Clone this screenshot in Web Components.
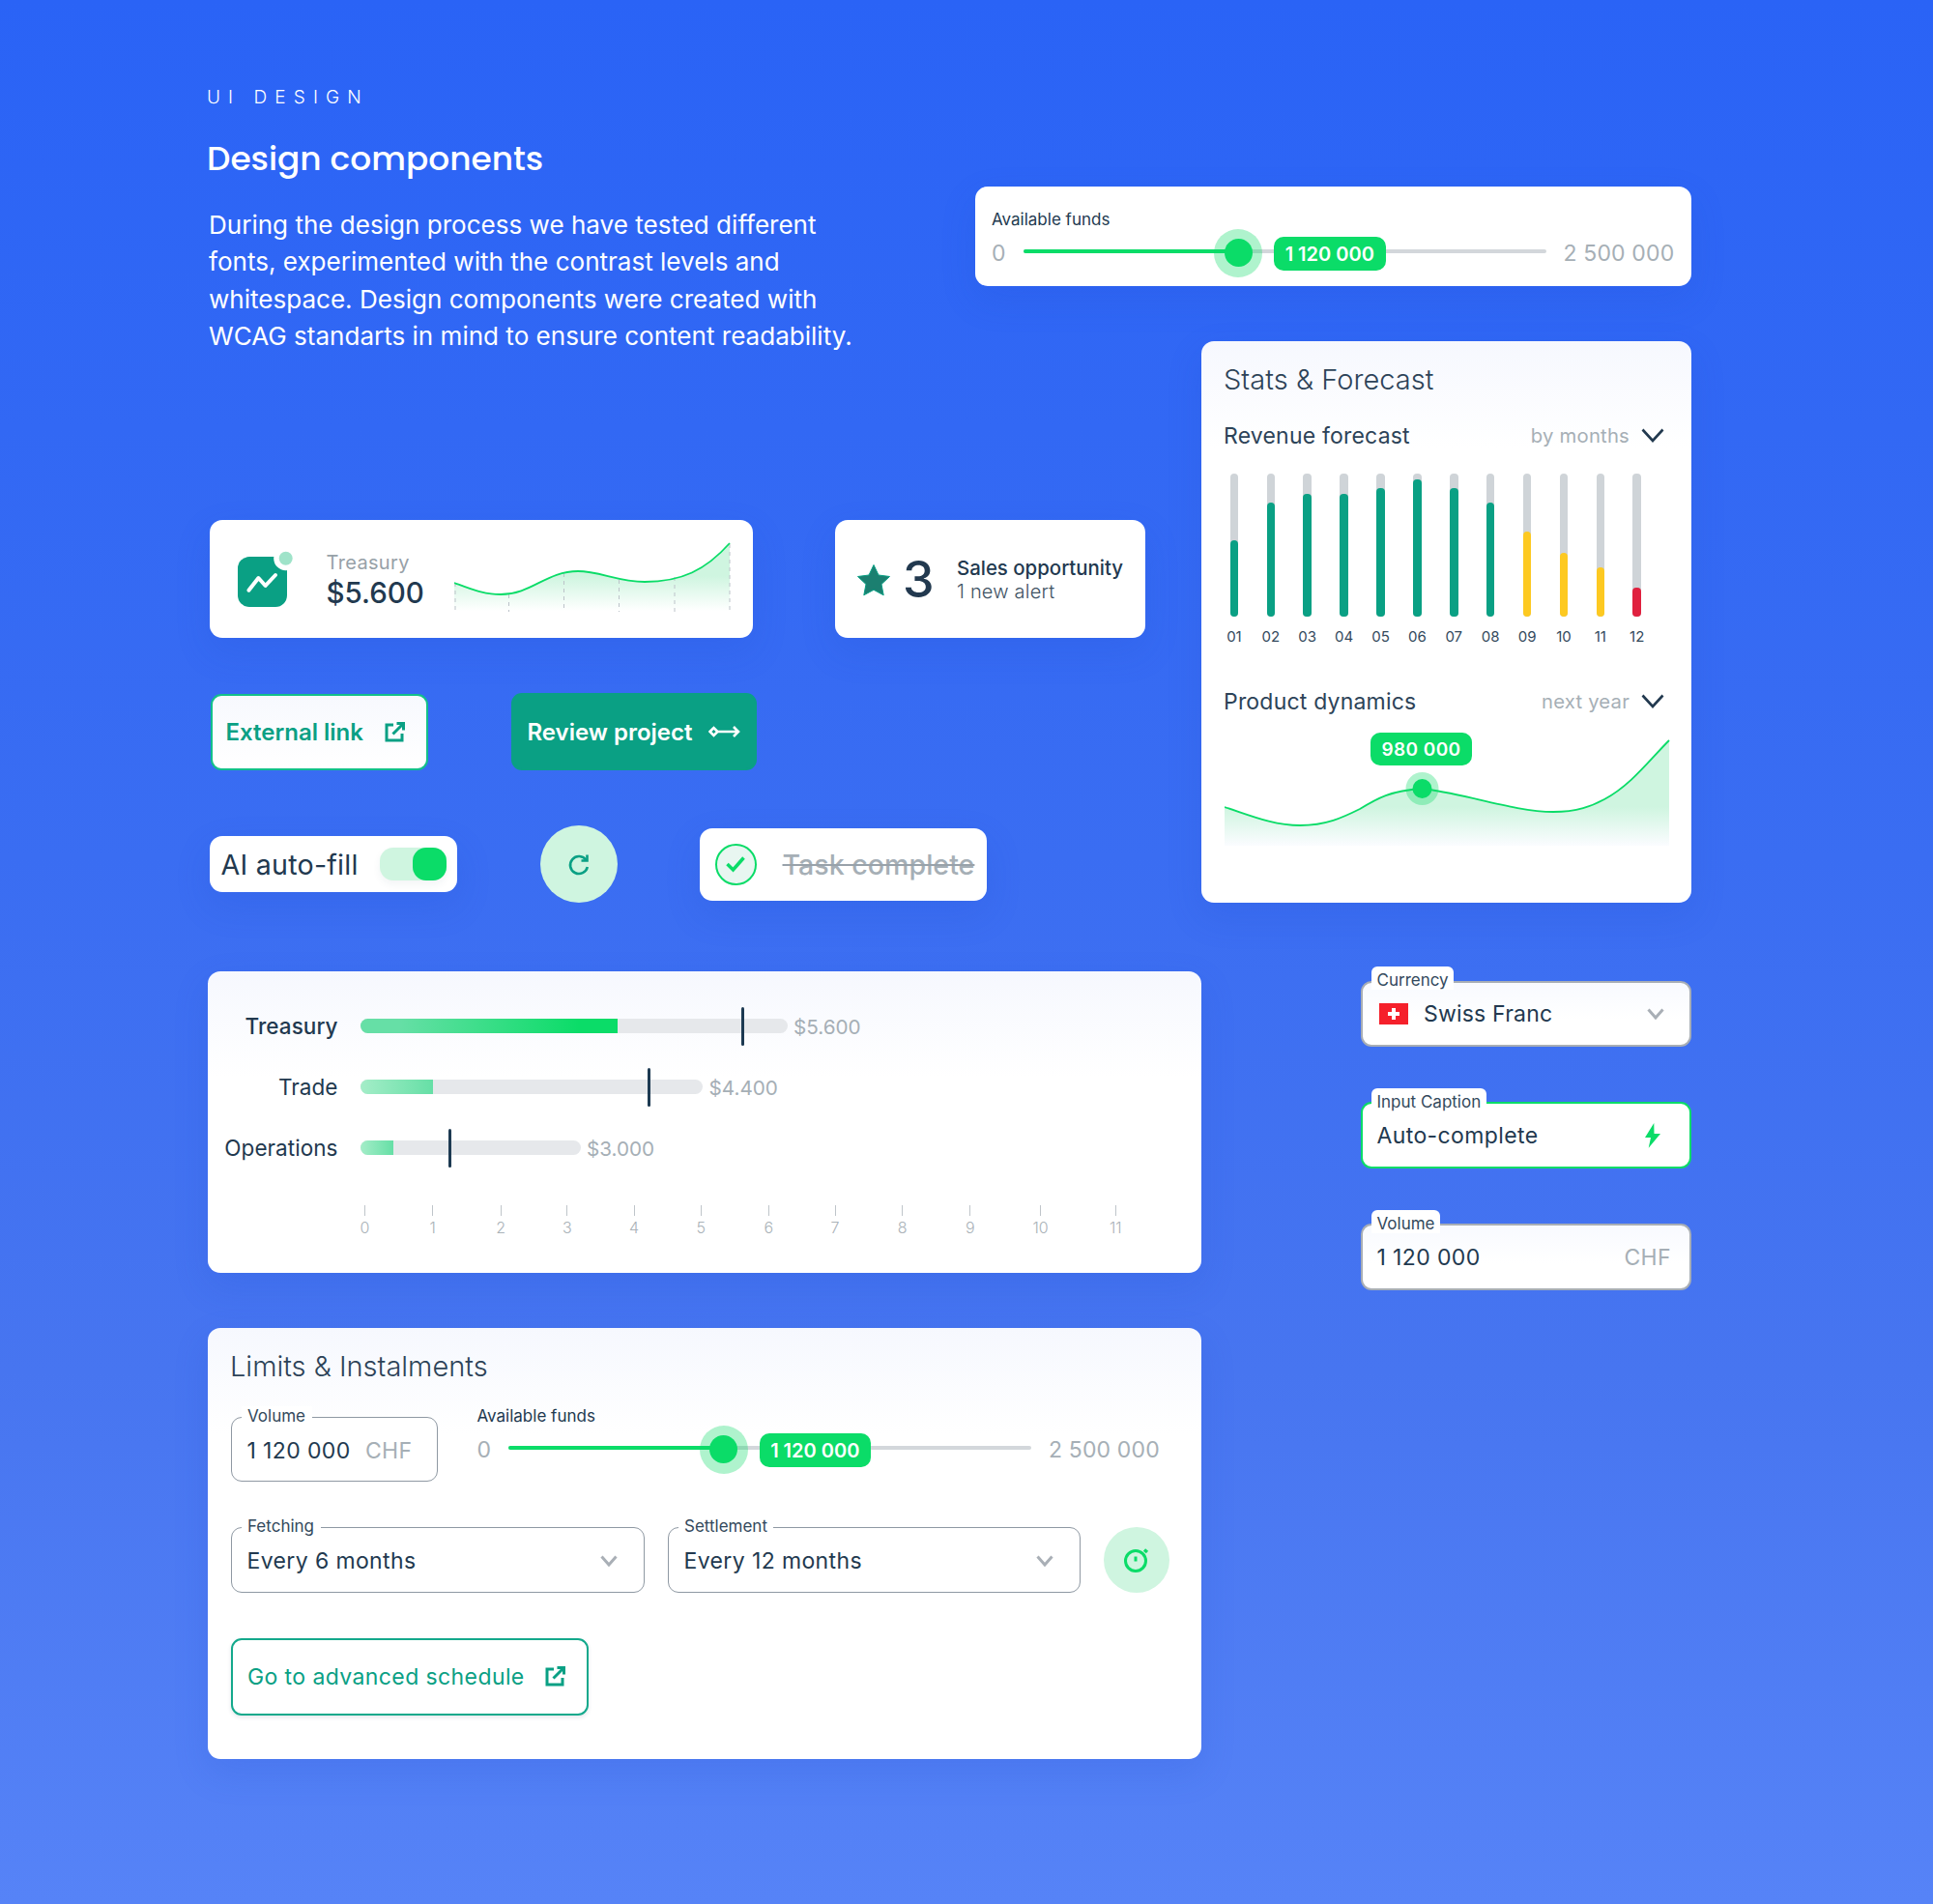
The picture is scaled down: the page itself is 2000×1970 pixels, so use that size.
<!doctype html>
<html lang="en">
<head>
<meta charset="utf-8">
<title>Design components</title>
<style>
  html, body { margin: 0; }
  body {
    width: 2000px;
    height: 1970px;
    overflow: hidden;
    background: linear-gradient(180deg, #2a63f6 0%, #3a6df2 45%, #4775f0 72%, #5683f7 100%);
    font-family: Inter, "Noto Sans", sans-serif;
    color: #22394f;
    --ink: #22394f;
    --muted: #a6afb6;
    --teal: #0aa084;
    --green: #0bdc68;
    --mint: #cff5e0;
  }
</style>
</head>
<body>
<design-board></design-board>
<script>
const chevron = (w, h, color, sw) => `<svg width="${w}" height="${h}" viewBox="0 0 ${w} ${h}" fill="none" stroke="${color}" stroke-width="${sw}"><path d="M1.5 1.5 L${w / 2} ${h - 2} L${w - 1.5} 1.5"/></svg>`;
const extIcon = `<svg width="21" height="21" viewBox="0 0 21 21" fill="none" stroke="currentColor" stroke-width="3"><path d="M9 3H2v16h16v-7"/><path d="M8.5 12.5 19 2"/><path d="M12.5 1.5h7v7"/></svg>`;

class UiCard extends HTMLElement {
  constructor() {
    super();
    this.attachShadow({ mode: "open" });
  }
  connectedCallback() {
    this.shadowRoot.innerHTML = `
      <style>
        :host {
          display: block;
          box-sizing: border-box;
          background: #fff;
          border-radius: 13px;
          box-shadow: 0 14px 36px rgba(32, 72, 205, .16);
        }
        :host([wash]) { background: linear-gradient(180deg, #f6f8fe 0, #fff 110px); }
      </style>
      <slot></slot>`;
  }
}
customElements.define("ui-card", UiCard);

class HeroIntro extends HTMLElement {
  constructor() {
    super();
    this.attachShadow({ mode: "open" });
  }
  connectedCallback() {
    this.shadowRoot.innerHTML = `
      <style>
        :host { display: block; color: #fff; padding-top: 89px; }
        .eyebrow { font-size: 19px; line-height: 24px; font-weight: 300; letter-spacing: 8.1px; margin-left: -1px; }
        h1 { margin: 30.5px 0 0 -1px; font: 500 34.4px/40px Poppins, Inter, sans-serif; }
        p { margin: 30px 0 0 1px; font-size: 26.05px; line-height: 38.5px; font-weight: 400; }
      </style>
      <div class="eyebrow">UI DESIGN</div>
      <h1>Design components</h1>
      <p>During the design process we have tested different<br>fonts, experimented with the contrast levels and<br>whitespace. Design components were created with<br>WCAG standarts in mind to ensure content readability.</p>`;
  }
}
customElements.define("hero-intro", HeroIntro);

class RangeSlider extends HTMLElement {
  constructor() {
    super();
    this.attachShadow({ mode: "open" });
  }
  connectedCallback() {
    const max = this.getAttribute("max");
    const val = this.getAttribute("value");
    this.shadowRoot.innerHTML = `
      <style>
        :host { display: block; }
        .label { font-size: 17px; line-height: 20px; color: var(--ink); }
        .row { display: flex; align-items: center; height: 50px; font-size: 23px; color: var(--muted); letter-spacing: .15px; white-space: nowrap; }
        .min { width: 32.5px; flex: none; }
        .track { position: relative; width: 541px; height: 50px; margin-right: 18px; flex: none; }
        .line { position: absolute; left: 0; right: 0; top: 21px; height: 4px; border-radius: 2px; background: #d3d7db; }
        .line i { display: block; width: 222px; height: 100%; border-radius: 2px; background: var(--green); }
        .halo { position: absolute; left: 197.5px; top: 0; width: 50px; height: 50px; border-radius: 50%; background: rgba(11, 220, 104, .33); }
        .knob { position: absolute; left: 208px; top: 10px; width: 29px; height: 29px; border-radius: 50%; background: var(--green); }
        .pill { position: absolute; left: 259.5px; top: 8px; width: 115.5px; height: 35px; box-sizing: border-box; display: flex; align-items: center; justify-content: center; border-radius: 10px; background: var(--green); color: #fff; font-size: 20px; font-weight: 600; letter-spacing: 0; }
      </style>
      <div class="label">Available funds</div>
      <div class="row">
        <span class="min">0</span>
        <div class="track">
          <div class="line"><i></i></div>
          <div class="halo"></div>
          <div class="knob"></div>
          <div class="pill">${val}</div>
        </div>
        <span>${max}</span>
      </div>`;
  }
}
customElements.define("range-slider", RangeSlider);

class TreasuryTile extends HTMLElement {
  constructor() {
    super();
    this.attachShadow({ mode: "open" });
  }
  connectedCallback() {
    this.shadowRoot.innerHTML = `
      <style>
        :host { display: flex; align-items: center; height: 100%; padding-left: 29px; box-sizing: border-box; }
        .icon { width: 58px; height: 58px; flex: none; margin-right: 33.5px; }
        .txt { width: 132.5px; flex: none; margin-top: 1px; }
        .lbl { font-size: 20px; line-height: 24px; color: #97a1a8; letter-spacing: .35px; }
        .val { font-size: 29.5px; line-height: 34px; font-weight: 500; margin-top: 2px; color: var(--ink); }
        .spark { flex: none; margin-top: -5px; }
      </style>
      <svg class="icon" viewBox="0 0 58 58">
        <rect x="0" y="6" width="51" height="52" rx="12" fill="#0aa084"/>
        <circle cx="49.7" cy="7.7" r="12.5" fill="#fff"/>
        <circle cx="49.7" cy="7.7" r="7" fill="#9fe3c9"/>
        <path d="M11.4 40.7 21.4 28l7.2 8L39 25" fill="none" stroke="#fff" stroke-width="4" stroke-linecap="round" stroke-linejoin="round"/>
      </svg>
      <div class="txt"><div class="lbl">Treasury</div><div class="val">$5.600</div></div>
      <svg class="spark" width="287" height="74" viewBox="0 0 287 74" fill="none">
        <defs><linearGradient id="sp" x1="0" y1="0" x2="0" y2="72" gradientUnits="userSpaceOnUse"><stop offset=".5" stop-color="#cff5e0"/><stop offset="1" stop-color="#fff"/></linearGradient></defs>
        <path d="M0 43C16 49 30 55 48 55C80 55 95 31 128 31C150 31 170 42 197 42C235 42 260 30 285 2L285 73L0 73Z" fill="url(#sp)"/>
        <path d="M1 43V73M56.500 55V73M113.500 33V73M170.500 40V73M228 37V73M285 3V73" stroke="#bcc3c9" stroke-width="1" stroke-dasharray="4 4"/>
        <path d="M0 43C16 49 30 55 48 55C80 55 95 31 128 31C150 31 170 42 197 42C235 42 260 30 285 2" stroke="#0bdc68" stroke-width="1.800"/>
      </svg>`;
  }
}
customElements.define("treasury-tile", TreasuryTile);

class AlertTile extends HTMLElement {
  constructor() {
    super();
    this.attachShadow({ mode: "open" });
  }
  connectedCallback() {
    this.shadowRoot.innerHTML = `
      <style>
        :host { display: flex; align-items: center; height: 100%; padding: 1px 0 0 22px; box-sizing: border-box; }
        svg { flex: none; width: 36px; height: 34px; margin-right: 12px; }
        .n { font-size: 52px; line-height: 60px; font-weight: 500; width: 56px; flex: none; color: var(--ink); }
        .a { font-size: 20.4px; line-height: 25px; font-weight: 500; color: var(--ink); }
        .b { font-size: 20px; line-height: 25px; font-weight: 300; color: #3f5364; letter-spacing: .2px; }
      </style>
      <svg viewBox="0 0 36 34"><path d="M18 1.500l5 10.500 11.500 1.500-8.500 8 2.200 11.300L18 27.300 7.800 32.800 10 21.500l-8.500-8L13 12z" fill="#1b7f70" stroke="#0aa084" stroke-width="1" stroke-linejoin="round"/></svg>
      <div class="n">3</div>
      <div><div class="a">Sales opportunity</div><div class="b">1 new alert</div></div>`;
  }
}
customElements.define("alert-tile", AlertTile);

class ActionButton extends HTMLElement {
  constructor() {
    super();
    this.attachShadow({ mode: "open" });
  }
  connectedCallback() {
    this.shadowRoot.innerHTML = `
      <style>
        :host {
          display: flex;
          align-items: center;
          justify-content: space-between;
          box-sizing: border-box;
          border-radius: 11px;
          font-size: 24px;
          font-weight: 600;
          color: var(--teal);
          background: linear-gradient(180deg, #f7f9fe, #fff);
          border: 2px solid #12c08a;
          white-space: nowrap;
        }
        :host([solid]) { background: var(--teal); border-color: var(--teal); color: #fff; }
        :host([plain]) { background: #fff; border-color: #14a98c; font-size: 23px; font-weight: 400; letter-spacing: .4px; box-shadow: 0 2px 4px rgba(30, 60, 90, .12); }
        ::slotted(svg) { flex: none; }
      </style>
      <slot></slot><slot name="icon"></slot>`;
  }
}
customElements.define("action-button", ActionButton);

class ToggleChip extends HTMLElement {
  constructor() {
    super();
    this.attachShadow({ mode: "open" });
  }
  connectedCallback() {
    this.shadowRoot.innerHTML = `
      <style>
        :host { display: flex; align-items: center; justify-content: space-between; height: 100%; padding: 0 11px 0 11.5px; box-sizing: border-box; font-size: 28.6px; letter-spacing: .25px; color: var(--ink); }
        .sw { width: 69px; height: 34px; border-radius: 14px; background: var(--mint); display: flex; justify-content: flex-end; box-shadow: 0 4px 8px rgba(30, 60, 90, .06); }
        .sw i { width: 35px; height: 34px; border-radius: 14px; background: var(--green); }
      </style>
      <span>AI auto-fill</span><div class="sw"><i></i></div>`;
  }
}
customElements.define("toggle-chip", ToggleChip);

class RoundButton extends HTMLElement {
  constructor() {
    super();
    this.attachShadow({ mode: "open" });
  }
  connectedCallback() {
    this.shadowRoot.innerHTML = `
      <style>
        :host { display: flex; align-items: center; justify-content: center; border-radius: 50%; background: var(--mint); flex: none; }
      </style>
      <slot></slot>`;
  }
}
customElements.define("round-button", RoundButton);

class TaskChip extends HTMLElement {
  constructor() {
    super();
    this.attachShadow({ mode: "open" });
  }
  connectedCallback() {
    this.shadowRoot.innerHTML = `
      <style>
        :host { display: flex; align-items: center; height: 100%; padding-left: 15.500px; box-sizing: border-box; }
        .c { width: 43px; height: 43px; box-sizing: border-box; border-radius: 50%; border: 2px solid var(--green); background: #e8f6f1; display: flex; align-items: center; justify-content: center; flex: none; margin-right: 27px; }
        .t { font-size: 28.6px; font-weight: 500; color: var(--muted); text-decoration: line-through; text-decoration-color: #98a2aa; white-space: nowrap; }
      </style>
      <div class="c"><svg width="22" height="18" viewBox="0 0 22 18" fill="none" stroke="#0bdc68" stroke-width="3.500"><path d="M2.500 9 8.500 15 19.500 2.500"/></svg></div>
      <span class="t">Task complete</span>`;
  }
}
customElements.define("task-chip", TaskChip);

class MonthBar extends HTMLElement {
  constructor() {
    super();
    this.attachShadow({ mode: "open" });
  }
  connectedCallback() {
    const tones = { green: "#0aa084", amber: "#fdc921", red: "#e0213f" };
    const tone = tones[this.getAttribute("tone")] || tones.green;
    this.shadowRoot.innerHTML = `
      <style>
        :host { display: flex; flex-direction: column; align-items: center; }
        .t { width: 8.500px; height: 148px; border-radius: 4px; background: #cfd4d8; display: flex; align-items: flex-end; }
        .t i { width: 100%; border-radius: 4px; }
        .l { margin-top: 12px; font-size: 15px; line-height: 18px; color: #33495c; }
      </style>
      <div class="t"><i style="height:${this.getAttribute("value")}px;background:${tone}"></i></div>
      <div class="l">${this.getAttribute("label")}</div>`;
  }
}
customElements.define("month-bar", MonthBar);

class StatsPanel extends HTMLElement {
  constructor() {
    super();
    this.attachShadow({ mode: "open" });
  }
  connectedCallback() {
    const vals = [[79.4, "green"], [117.7, "green"], [127, "green"], [127, "green"], [132.7, "green"], [141.7, "green"], [132.7, "green"], [117.7, "green"], [88.4, "amber"], [65.7, "amber"], [51, "amber"], [30.4, "red"]];
    const bars = vals.map((v, i) => `<month-bar label="${String(i + 1).padStart(2, "0")}" value="${v[0]}" tone="${v[1]}"></month-bar>`).join("");
    const chev = chevron(24, 15, "#22394f", 2.6);
    this.shadowRoot.innerHTML = `
      <style>
        :host { display: block; padding: 22px 28px 0 23px; }
        h2 { margin: 0; font-size: 29px; line-height: 36px; font-weight: 300; color: #2d4358; letter-spacing: .05px; }
        .head { display: flex; align-items: center; justify-content: space-between; font-size: 23px; line-height: 28px; color: #2d4358; letter-spacing: .2px; }
        .head.one { margin-top: 25.500px; }
        .head.two { margin-top: 43.500px; }
        .side { display: flex; align-items: center; gap: 12px; font-size: 20.3px; color: var(--muted); }
        .bars { display: grid; grid-template-columns: repeat(12, 37.900px); margin: 25.500px 0 0 -8px; }
        .chart { position: relative; margin: 18.500px 0 0 1px; height: 120px; }
        .chart svg { display: block; }
        .pill { position: absolute; left: 151px; top: 0; width: 105px; height: 34px; border-radius: 10px; background: var(--green); color: #fff; font-size: 19px; font-weight: 600; letter-spacing: .4px; display: flex; align-items: center; justify-content: center; }
      </style>
      <h2>Stats &amp; Forecast</h2>
      <div class="head one"><span>Revenue forecast</span><span class="side">by months ${chev}</span></div>
      <div class="bars">${bars}</div>
      <div class="head two"><span>Product dynamics</span><span class="side">next year ${chev}</span></div>
      <div class="chart">
        <svg width="461" height="120" viewBox="0 0 461 120" fill="none">
          <defs><linearGradient id="pd" x1="0" y1="8" x2="0" y2="119" gradientUnits="userSpaceOnUse"><stop offset=".62" stop-color="#cff5e0"/><stop offset=".98" stop-color="#fbfcff"/></linearGradient></defs>
          <path d="M0 77C25 85 50 96 78 96C105 96 122 88 140 79C158 68 172 60 204 58C245 62 300 82 340 82C365 82 380 76 393 69C420 55 440 28 460 8L460 117L0 117Z" fill="url(#pd)"/>
          <path d="M0 77C25 85 50 96 78 96C105 96 122 88 140 79C158 68 172 60 204 58C245 62 300 82 340 82C365 82 380 76 393 69C420 55 440 28 460 8" stroke="#0bdc68" stroke-width="1.800"/>
          <circle cx="204.500" cy="58" r="17" fill="#0bdc68" fill-opacity=".33"/>
          <circle cx="204.500" cy="58" r="10" fill="#0bdc68"/>
        </svg>
        <div class="pill">980 000</div>
      </div>`;
  }
}
customElements.define("stats-panel", StatsPanel);

class BulletRow extends HTMLElement {
  constructor() {
    super();
    this.attachShadow({ mode: "open" });
  }
  connectedCallback() {
    const a = (k) => this.getAttribute(k);
    this.shadowRoot.innerHTML = `
      <style>
        :host { display: flex; align-items: center; height: 63px; }
        .name { width: 134.5px; margin-right: 23px; text-align: right; font-size: 22.500px; color: var(--ink); flex: none; letter-spacing: .05px; }
        :host([strong]) .name { font-weight: 500; }
        .track { position: relative; height: 15px; border-radius: 7.500px; background: #e6e8eb; flex: none; }
        .fill { height: 100%; border-radius: 7.500px 0 0 7.500px; background: linear-gradient(90deg, #a4edc8, #66dfa6); }
        :host([strong]) .fill { background: linear-gradient(90deg, #66dfa6 15%, #0bdc68 85%); }
        .mark { position: absolute; top: -12.500px; width: 3px; height: 40px; border-radius: 1.500px; background: #1d3a52; }
        .val { margin: 1px 0 0 6.5px; font-size: 20.7px; color: var(--muted); }
      </style>
      <div class="name">${a("label")}</div>
      <div class="track" style="width:${a("total")}px">
        <div class="fill" style="width:${a("fill")}px"></div>
        <div class="mark" style="left:${a("mark")}px"></div>
      </div>
      <span class="val">${a("value")}</span>`;
  }
}
customElements.define("bullet-row", BulletRow);

class ScaleAxis extends HTMLElement {
  constructor() {
    super();
    this.attachShadow({ mode: "open" });
  }
  connectedCallback() {
    const steps = [70.1, 70.5, 68.8, 69.2, 69.2, 70.1, 68.7, 69.6, 70.2, 72.7, 77.8, 20];
    const ticks = steps.map((s, i) => `<div class="t" style="width:${s}px"><div class="in"><i></i><span>${i}</span></div></div>`).join("");
    this.shadowRoot.innerHTML = `
      <style>
        :host { display: flex; }
        .t { flex: none; }
        .in { width: 24px; margin-left: -12px; display: flex; flex-direction: column; align-items: center; }
        i { width: 1px; height: 11px; background: #bfc5ca; }
        span { margin-top: 2.5px; font-size: 16px; line-height: 18px; font-weight: 300; color: #aab2b8; }
      </style>
      ${ticks}`;
  }
}
customElements.define("scale-axis", ScaleAxis);

class UiField extends HTMLElement {
  constructor() {
    super();
    this.attachShadow({ mode: "open" });
  }
  connectedCallback() {
    this.shadowRoot.innerHTML = `
      <style>
        :host { display: block; position: relative; height: 67.400px; box-sizing: border-box; flex: none; }
        .box { display: flex; align-items: center; justify-content: space-between; height: 100%; box-sizing: border-box; border: 1.800px solid #8f99a3; border-radius: 11px; padding: 2px 15px 0 15.5px; background: #fff; font-size: 23px; color: var(--ink); letter-spacing: .38px; white-space: nowrap; }
        .cap { position: absolute; left: 10.5px; top: -11.200px; padding: 0 6.500px; font-size: 17px; line-height: 20px; background: #fff; color: #33495c; letter-spacing: 0; }
        :host([tab]) { height: 68.4px; margin-top: -.5px; }
        :host([tab]) .box { border: 2px solid #a8aeb5; padding: 1px 15px 0 14.5px; background: linear-gradient(180deg, #f8faff, #fff 60%); }
        :host([tab]) .cap { left: 11px; top: -14.500px; padding: 4px 5.5px 0; border-radius: 6px 6px 0 0; }
        :host([accent]) .box { border-color: var(--green); background: #fff; }
      </style>
      <div class="box"><slot></slot><slot name="end"></slot></div>
      <div class="cap">${this.getAttribute("label")}</div>`;
  }
}
customElements.define("ui-field", UiField);

class DesignBoard extends HTMLElement {
  constructor() {
    super();
    this.attachShadow({ mode: "open" });
  }
  connectedCallback() {
    const grayChev = chevron(18, 12, "#a9afb6", 3);
    this.shadowRoot.innerHTML = `
      <style>
        :host {
          display: grid;
          grid-template-columns: 794px 234px 165px 342px;
          grid-template-rows: 353px 185px 396px auto;
          box-sizing: border-box;
          height: 1970px;
          padding-left: 215px;
        }
        hero-intro { grid-area: 1 / 1 / 3 / 2; }
        .funds { grid-area: 1 / 2 / 2 / 5; align-self: start; margin-top: 193px; height: 103px; padding: 24px 0 0 17px; }
        .stats { grid-area: 2 / 3 / 4 / 5; height: 581px; }
        .left { grid-area: 3 / 1 / 4 / 3; padding-left: 2px; }
        .row { display: flex; align-items: center; }
        .tiles > * { height: 122px; }
        .actions { margin-top: 57px; height: 80px; }
        .extra { margin-top: 57px; height: 80px; }
        .ext { width: 225px; height: 79px; padding: 0 22px 0 14px; margin-left: .5px; }
        .rev { width: 254px; height: 80px; padding: 0 15px 0 15px; margin-left: 86px; }
        .main { grid-area: 4 / 1 / 5 / 3; padding-top: 71px; }
        .bullet { height: 312px; padding-top: 25px; }
        .bullet scale-axis { margin: 28px 0 0 162.5px; }
        .limits { margin-top: 57px; height: 446px; padding: 22px 0 0 24px; }
        h2 { margin: 0 0 0 -1px; font-size: 29px; line-height: 36px; font-weight: 300; color: #2d4358; }
        .l1 { margin-top: 34px; align-items: flex-start; }
        .l2 { margin-top: 46.500px; }
        .go { width: 370px; height: 80px; margin-top: 46.500px; padding: 0 22px 0 15px; }
        .unit { color: var(--muted); }
        .fields { grid-area: 4 / 4 / 5 / 5; padding-top: 81px; display: flex; flex-direction: column; gap: 58px; }
        .flagged { display: flex; align-items: center; gap: 16px; letter-spacing: .2px; }
        .flagged svg { margin-left: 2.5px; }
      </style>

      <hero-intro></hero-intro>

      <ui-card class="funds"><range-slider value="1 120 000" max="2 500 000"></range-slider></ui-card>

      <ui-card class="stats" wash><stats-panel></stats-panel></ui-card>

      <div class="left">
        <div class="row tiles">
          <ui-card style="width:562px"><treasury-tile></treasury-tile></ui-card>
          <ui-card style="width:321px;margin-left:85px"><alert-tile></alert-tile></ui-card>
        </div>
        <div class="row actions">
          <action-button class="ext">External link <span slot="icon" style="display:flex">${extIcon}</span></action-button>
          <action-button class="rev" solid>Review project
            <svg slot="icon" width="33" height="14" viewBox="0 0 33 14" fill="none" stroke="#fff" stroke-width="2.600"><path d="M1.500 7 5.500 3 9.500 7 5.500 11zM9.500 7H31M26 2l5 5-5 5"/></svg>
          </action-button>
        </div>
        <div class="row extra">
          <ui-card style="width:256px;height:58px;flex:none"><toggle-chip></toggle-chip></ui-card>
          <round-button style="width:80px;height:80px;margin-left:86px">
            <svg style="margin-top:1px" width="24" height="24" viewBox="0 0 24 24" fill="none" stroke="#0aa084" stroke-width="2.600"><path d="M19.500 7A9 9 0 1 0 20.800 14"/><path d="M20.500 1.500V7.500H14.500"/></svg>
          </round-button>
          <ui-card style="width:297px;height:75px;margin-left:85px;flex:none"><task-chip></task-chip></ui-card>
        </div>
      </div>

      <div class="main">
        <ui-card class="bullet" wash>
          <bullet-row strong label="Treasury" total="442" fill="266" mark="394" value="$5.600"></bullet-row>
          <bullet-row label="Trade" total="354.500" fill="75.500" mark="297.500" value="$4.400"></bullet-row>
          <bullet-row label="Operations" total="228" fill="34" mark="91" value="$3.000"></bullet-row>
          <scale-axis></scale-axis>
        </ui-card>

        <ui-card class="limits" wash>
          <h2>Limits &amp; Instalments</h2>
          <div class="row l1">
            <ui-field label="Volume" style="width:213.500px;margin-right:41px"><span style="display:flex;justify-content:space-between;width:100%">1 120 000 <span class="unit" style="margin-right:10px">CHF</span></span></ui-field>
            <range-slider style="margin-top:-11px" value="1 120 000" max="2 500 000"></range-slider>
          </div>
          <div class="row l2">
            <ui-field label="Fetching" style="width:427.500px">Every 6 months<span slot="end" style="display:flex;margin-right:12px">${grayChev}</span></ui-field>
            <ui-field label="Settlement" style="width:427px;margin-left:24.500px">Every 12 months<span slot="end" style="display:flex;margin-right:12px">${grayChev}</span></ui-field>
            <round-button style="width:68.500px;height:68.500px;margin-left:23.500px">
              <svg width="28" height="28" viewBox="0 0 28 28" fill="none" stroke="#0bdc68" stroke-width="3"><circle cx="13" cy="15" r="10.500"/><path d="M13 10.500v5"/><path d="M22 3.500l3 2.500" stroke-width="3.500"/></svg>
            </round-button>
          </div>
          <action-button class="go" plain>Go to advanced schedule <span slot="icon" style="display:flex">${extIcon}</span></action-button>
        </ui-card>
      </div>

      <div class="fields">
        <ui-field tab label="Currency"><span class="flagged"><svg width="30" height="22" viewBox="0 0 30 22"><rect width="30" height="22" fill="#f5202b"/><path d="M13 5h4v4h4v4h-4v4h-4v-4H9V9h4z" fill="#fff"/></svg>Swiss Franc</span><span slot="end" style="display:flex;margin-right:11px">${grayChev}</span></ui-field>
        <ui-field tab accent label="Input Caption">Auto-complete<svg slot="end" style="margin-right:15px" width="16" height="26" viewBox="0 0 16 26"><path d="M9.300 0 0 15h6L3.700 25.700 16 11H9.500z" fill="#0bdc68"/></svg></ui-field>
        <ui-field tab label="Volume">1 120 000<span slot="end" class="unit" style="color:#a6afb6;margin-right:4px">CHF</span></ui-field>
      </div>`;
  }
}
customElements.define("design-board", DesignBoard);
</script>
</body>
</html>
